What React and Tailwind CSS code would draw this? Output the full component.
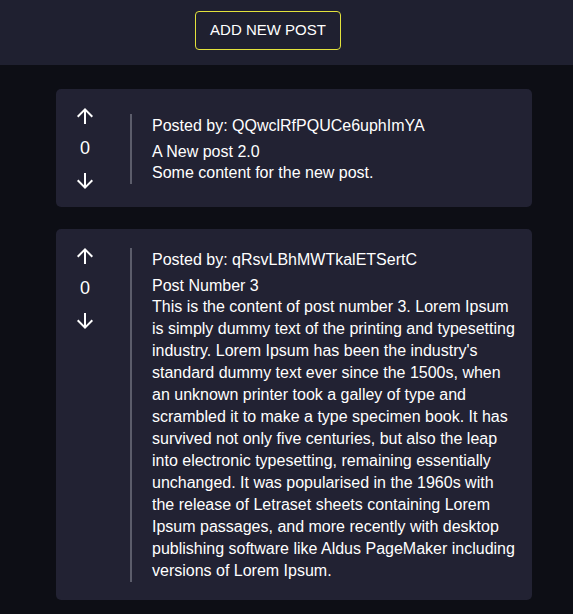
import React from 'react';
import { MdArrowUpward, MdArrowDownward } from 'react-icons/md';

const posts = [
    {
        id: 1,
        author: 'QQwclRfPQUCe6uphImYA',
        title: 'A New post 2.0',
        content: 'Some content for the new post.',
        votes: 0,
    },
    {
        id: 2,
        author: 'qRsvLBhMWTkalETSertC',
        title: 'Post Number 3',
        content:
            "This is the content of post number 3. Lorem Ipsum is simply dummy text of the printing and typesetting industry. Lorem Ipsum has been the industry's standard dummy text ever since the 1500s, when an unknown printer took a galley of type and scrambled it to make a type specimen book. It has survived not only five centuries, but also the leap into electronic typesetting, remaining essentially unchanged. It was popularised in the 1960s with the release of Letraset sheets containing Lorem Ipsum passages, and more recently with desktop publishing software like Aldus PageMaker including versions of Lorem Ipsum.",
        votes: 0,
    },
];

const PostCard = ({ post }) => {
    return (
        <div className="bg-[#222233] rounded-[5px] flex pl-[17px] pr-[12px] pt-[15px] pb-[14px]">
            <div className="w-[24px] self-start flex flex-col items-center gap-[10px] text-white">
                <button className="block">
                    <MdArrowUpward size={24} />
                </button>
                <span className="text-[18px] leading-[21px]">{post.votes}</span>
                <button className="block">
                    <MdArrowDownward size={24} />
                </button>
            </div>
            <div className="flex-1 self-center my-[4px] ml-[33px] border-l-2 border-[#5c5d6b] pl-[20px] text-[16px] text-white">
                <div className="leading-[24px] mb-[3px]">Posted by: {post.author}</div>
                <div className="leading-[21px]">{post.title}</div>
                <p className="leading-[22px]">{post.content}</p>
            </div>
        </div>
    );
};

export default function App() {
    return (
        <div className="min-h-screen bg-[#0d0e15] font-['Liberation_Sans',Arial,sans-serif] pb-[13px]">
            <header className="h-[65px] bg-[#1f2030] pt-[11px]">
                <button className="ml-[195px] w-[146px] h-[39px] border border-[#e2e23c] rounded-[4px] text-white text-[15px]">
                    ADD NEW POST
                </button>
            </header>
            <main className="ml-[56px] w-[476px] pt-[24px] flex flex-col gap-[22px]">
                {posts.map((post) => (
                    <PostCard key={post.id} post={post} />
                ))}
            </main>
        </div>
    );
}
